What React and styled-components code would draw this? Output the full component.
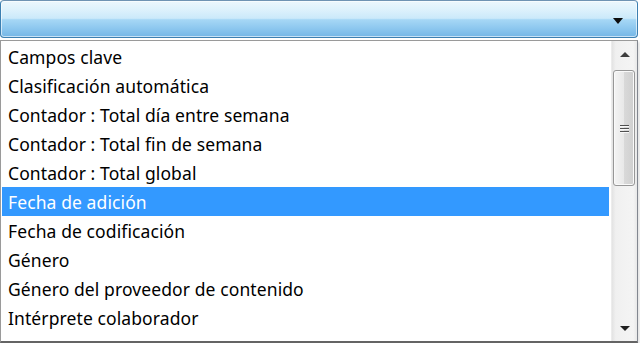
import React from 'react'
import styled, { createGlobalStyle } from 'styled-components'

const GlobalStyle = createGlobalStyle`
  html, body {
    margin: 0;
    padding: 0;
    background: #ffffff;
    overflow: hidden;
  }
  body {
    font-family: 'Noto Sans', 'Open Sans', sans-serif;
  }
`

const items = [
  'Campos clave',
  'Clasificación automática',
  'Contador : Total día entre semana',
  'Contador : Total fin de semana',
  'Contador : Total global',
  'Fecha de adición',
  'Fecha de codificación',
  'Género',
  'Género del proveedor de contenido',
  'Intérprete colaborador',
]

const Wrap = styled.div`
  width: 640px;
  height: 343px;
  display: flex;
  flex-direction: column;
  gap: 2px;
  background: #fff;
`

const Combo = styled.div`
  height: 38px;
  margin-right: 2px;
  box-sizing: border-box;
  border: 1px solid #3c7fb1;
  border-top-color: #6f93b3;
  border-radius: 4px;
  box-shadow: inset 0 0 0 1px rgba(255, 255, 255, 0.6);
  background: linear-gradient(
    to bottom,
    #ecf7fd 0%,
    #dff2fc 22%,
    #cbe9fa 48%,
    #a6d7f5 52%,
    #8ec8ef 75%,
    #74b6e6 100%
  );
  display: flex;
  align-items: center;
  justify-content: flex-end;
  padding-right: 14px;
`

const Arrow = styled.span`
  width: 0;
  height: 0;
  margin-top: 3px;
  border-left: 5px solid transparent;
  border-right: 5px solid transparent;
  border-top: 6px solid #0d0d0d;
`

const List = styled.div`
  flex: 1;
  margin-right: 2px;
  box-sizing: border-box;
  border: 1px solid #9a9a9a;
  border-bottom: 2px solid #646464;
  border-right-color: #828790;
  display: flex;
  box-shadow: 2px 2px 2px rgba(0, 0, 0, 0.1);
`

const Options = styled.div`
  flex: 1;
  display: flex;
  flex-direction: column;
  padding: 1px 2px 0 1px;
`

const Option = styled.div`
  height: 29px;
  display: flex;
  align-items: center;
  padding-left: 6px;
  font-size: 17.5px;
  letter-spacing: 0.1px;
  color: ${p => (p.$active ? '#ffffff' : '#000000')};
  background: ${p => (p.$active ? '#3399ff' : 'transparent')};
  white-space: nowrap;
`

const Scrollbar = styled.div`
  width: 25px;
  display: flex;
  flex-direction: column;
  background: linear-gradient(to right, #e3e3e3 0%, #f0f0f0 15%, #f4f4f4 85%, #e8e8e8 100%);
  border-left: 1px solid #ececec;
`

const ScrollButton = styled.div`
  height: 26px;
  display: flex;
  align-items: center;
  justify-content: center;
`

const Tri = styled.span`
  width: 0;
  height: 0;
  border-left: 5px solid transparent;
  border-right: 5px solid transparent;
  ${p =>
    p.$up
      ? 'border-bottom: 5px solid #3e3e3e;'
      : 'border-top: 5px solid #202020;'}
`

const Track = styled.div`
  flex: 1;
  display: flex;
  flex-direction: column;
  padding: 3px 2px 0 1px;
`

const Thumb = styled.div`
  height: 116px;
  box-sizing: border-box;
  border: 1px solid #979797;
  border-radius: 3px;
  background: linear-gradient(to right, #f4f4f4 0%, #e8e8e8 50%, #d9d9d9 51%, #cfcfcf 100%);
  box-shadow: inset 0 0 0 1px #fafafa;
  display: flex;
  flex-direction: column;
  align-items: center;
  justify-content: center;
  gap: 2px;
`

const Grip = styled.span`
  width: 9px;
  height: 1px;
  background: #505050;
  box-shadow: 0 1px 0 #f8f8f8;
`

export default function App() {
  return (
    <Wrap>
      <GlobalStyle />
      <Combo>
        <Arrow />
      </Combo>
      <List>
        <Options>
          {items.map(it => (
            <Option key={it} $active={it === 'Fecha de adición'}>
              {it}
            </Option>
          ))}
        </Options>
        <Scrollbar>
          <ScrollButton>
            <Tri $up />
          </ScrollButton>
          <Track>
            <Thumb>
              <Grip />
              <Grip />
              <Grip />
            </Thumb>
          </Track>
          <ScrollButton>
            <Tri />
          </ScrollButton>
        </Scrollbar>
      </List>
    </Wrap>
  )
}
